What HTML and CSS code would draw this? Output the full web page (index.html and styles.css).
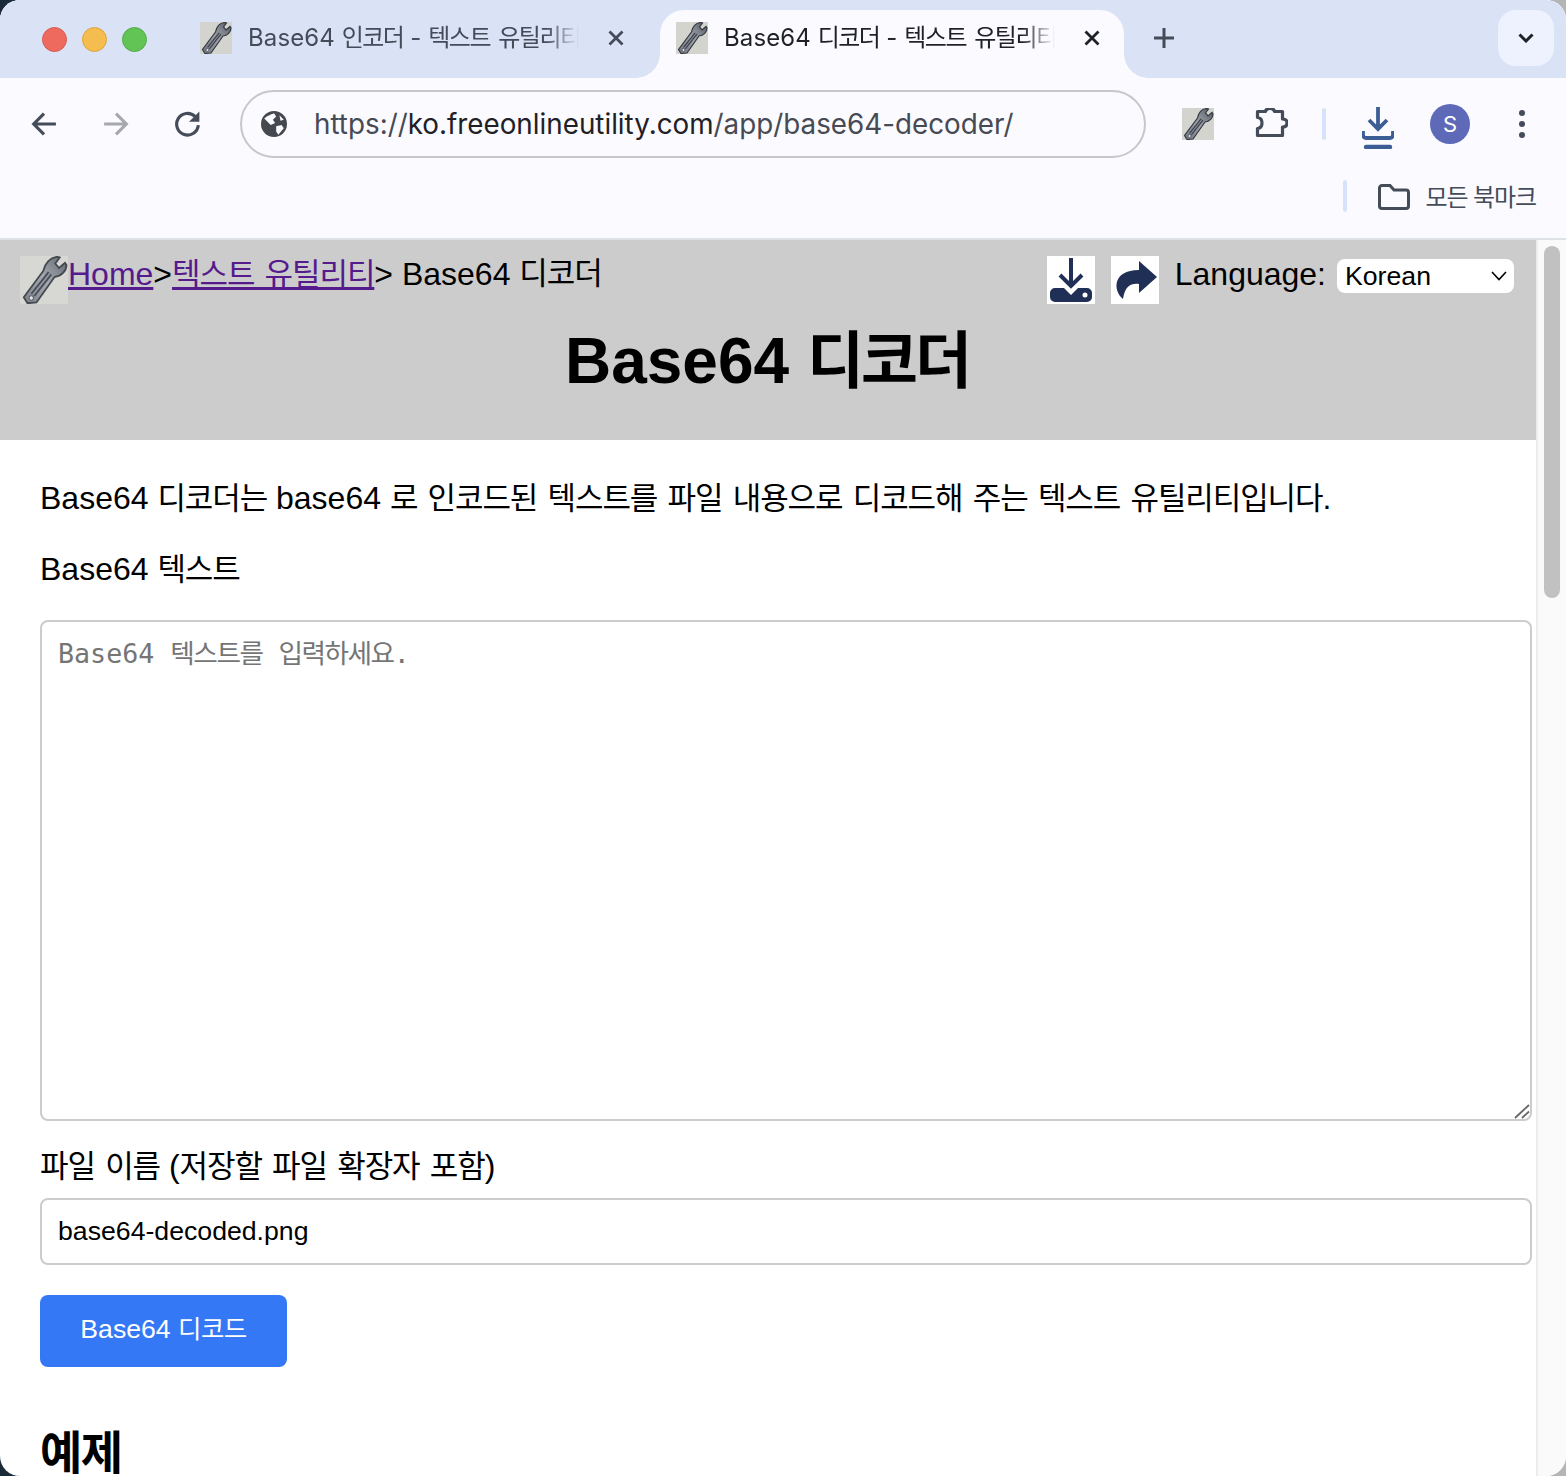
FILE: index.html
```html
<!DOCTYPE html>
<html lang="ko">
<head>
<meta charset="utf-8">
<title>Base64 디코더</title>
<link rel="stylesheet" href="styles.css">
</head>
<body>
<svg class="defs" width="0" height="0" aria-hidden="true">
  <defs>
    <linearGradient id="steel" x1="0" y1="1" x2="1" y2="0">
      <stop offset="0" stop-color="#6f757f"/>
      <stop offset=".5" stop-color="#9da2aa"/>
      <stop offset="1" stop-color="#525862"/>
    </linearGradient>
    <symbol id="wrench" viewBox="0 0 32 32">
      <rect width="32" height="32" fill="#d4d4cf"/>
      <path d="M5 31.5 L2.5 27.5 L15.5 10 C16.5 5 20 1 25 .5 L26.5 1 L23.5 5 L26 8 L30 4.5 L31 6 C31 10 27.5 13.5 23 14 L11 31 Z" fill="url(#steel)" stroke="#343941" stroke-width="1.2"/>
      <path d="M8.5 26 L20 11.5" stroke="#3a3f48" stroke-width="3.6" fill="none"/>
      <path d="M8.5 26 L20 11.5" stroke="#8b909a" stroke-width="1.2" fill="none"/>
      <circle cx="7.5" cy="28" r="1.5" fill="#dfe1e4" stroke="#343941" stroke-width=".6"/>
    </symbol>
  </defs>
</svg>
<div class="window">
  <header class="chrome">
    <div class="tabstrip">
      <div class="lights">
        <span class="light red"></span>
        <span class="light yellow"></span>
        <span class="light green"></span>
      </div>
      <div class="tab">
        <svg class="favicon"><use href="#wrench"/></svg>
        <span class="tab-title">Base64 <span class="ko-tab">인코더</span> - <span class="ko-tab">텍스트 유틸리티</span></span>
        <svg class="tab-close" viewBox="0 0 16 16"><path d="M1.5 1.5 L14.5 14.5 M14.5 1.5 L1.5 14.5"/></svg>
      </div>
      <div class="tab active">
        <svg class="favicon"><use href="#wrench"/></svg>
        <span class="tab-title">Base64 <span class="ko-tab">디코더</span> - <span class="ko-tab">텍스트 유틸리티</span></span>
        <svg class="tab-close" viewBox="0 0 16 16"><path d="M1.5 1.5 L14.5 14.5 M14.5 1.5 L1.5 14.5"/></svg>
      </div>
      <svg class="new-tab" viewBox="0 0 20 20"><path d="M10 0 V20 M0 10 H20"/></svg>
      <div class="tab-menu">
        <svg viewBox="0 0 16 10"><path d="M1.5 1.5 L8 8 L14.5 1.5"/></svg>
      </div>
    </div>
    <div class="toolbar">
      <div class="nav">
        <svg class="nav-icon" viewBox="0 0 24 24"><path d="M23 12 H3 M12 2.5 L2.5 12 L12 21.5"/></svg>
        <svg class="nav-icon dim" viewBox="0 0 24 24"><path d="M1 12 H21 M12 2.5 L21.5 12 L12 21.5"/></svg>
        <svg class="nav-icon" viewBox="0 0 24 24"><path d="M21.5 13 A10 10 0 1 1 18.5 5"/><path class="solid" d="M22.5 0.5 V10 H13 Z"/></svg>
      </div>
      <div class="omnibox">
        <svg class="globe" viewBox="0 0 24 24"><circle cx="12" cy="12" r="12" fill="#45484f"/><path d="M3 7 C6 4 10 3 12 2 L14 5 L11 8 L13 11 L9 13 L6 10 Z M14 14 L19 13 L21 16 L16 22 L14 19 Z M17 4 L21 8 L18 9 Z" fill="#fafaff"/></svg>
        <span class="url"><span class="url-dim">https://</span>ko.freeonlineutility.com<span class="url-dim">/app/base64-decoder/</span></span>
      </div>
      <svg class="ext-icon"><use href="#wrench"/></svg>
      <svg class="puzzle" viewBox="0 0 34 32"><path d="M3.5 3.5 H11.5 Q12 .5 16 .5 Q20 .5 20.5 3.5 H28.5 V11 Q33 11 33 15 Q33 19 28.5 19 V27.5 H3.5 V20.5 Q8 20 8 15 Q8 10 3.5 9.5 Z"/></svg>
      <span class="sep"></span>
      <svg class="download" viewBox="0 0 32 42"><path d="M16 0 V21 M7 13 L16 22 L25 13 M1 24 V28 A3 3 0 0 0 4 31 H28 A3 3 0 0 0 31 28 V24"/><path class="bar" d="M4 40 H28"/></svg>
      <span class="avatar">S</span>
      <span class="kebab"><i></i><i></i><i></i></span>
    </div>
    <div class="bookmarks">
      <span class="sep tall"></span>
      <svg class="folder" viewBox="0 0 32 26"><path d="M1.5 4 A2.5 2.5 0 0 1 4 1.5 H12 L16 6 H28 A2.5 2.5 0 0 1 30.5 8.5 V22 A2.5 2.5 0 0 1 28 24.5 H4 A2.5 2.5 0 0 1 1.5 22 Z"/></svg>
      <span class="bookmark-label">모든 북마크</span>
    </div>
  </header>
  <div class="viewport">
    <main class="page">
      <section class="banner">
        <div class="banner-top">
          <nav class="crumbs">
            <svg class="logo"><use href="#wrench"/></svg>
            <a href="#">Home</a>&gt;<a href="#"><span class="ko">텍스트 유틸리티</span></a>&gt; Base64 <span class="ko">디코더</span>
          </nav>
          <div class="tools">
            <span class="tool">
              <svg viewBox="0 0 48 48"><path class="navy-line" d="M24 2 V28 M13 19 L24 30 L35 19"/><path class="navy" d="M3 37 A5 5 0 0 1 8 32 H17 L24 39 L31 32 H40 A5 5 0 0 1 45 37 V41 A5 5 0 0 1 40 46 H8 A5 5 0 0 1 3 41 Z"/><circle cx="38" cy="39" r="2.5" fill="#fff"/></svg>
            </span>
            <span class="tool">
              <svg viewBox="0 0 48 48"><path class="navy" d="M28 5 L46 21 L28 37 V28 C20 27 14 30 12 43 C2 35 1 14 28 14 Z"/></svg>
            </span>
            <label class="lang" for="lang">Language:</label>
            <span class="select-wrap">
              <select id="lang" class="select"><option>Korean</option></select>
              <svg class="select-arrow" viewBox="0 0 16 10"><path d="M1 1 L8 8.5 L15 1"/></svg>
            </span>
          </div>
        </div>
        <h1>Base64 <span class="ko-h1">디코더</span></h1>
      </section>
      <section class="content">
        <p class="intro">Base64 <span class="ko">디코더는</span> base64 <span class="ko">로 인코드된 텍스트를 파일 내용으로 디코드해 주는 텍스트 유틸리티입니다</span>.</p>
        <label class="label first" for="b64">Base64 <span class="ko">텍스트</span></label>
        <div class="area-wrap">
          <textarea id="b64" class="area" aria-label="Base64 텍스트를 입력하세요."></textarea>
          <span class="hint">Base64 <span class="ko-hint">텍스트를</span> <span class="ko-hint">입력하세요</span>.</span>
          <svg class="grip" viewBox="0 0 16 16"><path d="M1 15 L15 2 M8 15 L15 8.5"/></svg>
        </div>
        <label class="label second" for="fname"><span class="ko">파일 이름</span> (<span class="ko">저장할 파일 확장자 포함</span>)</label>
        <input id="fname" class="field" type="text" value="base64-decoded.png">
        <button class="btn" type="button"><span class="btn-text">Base64 <span class="ko-btn">디코드</span></span></button>
        <h2><span class="ko-h2">예제</span></h2>
      </section>
    </main>
    <aside class="scrollbar"><div class="thumb"></div></aside>
  </div>
</div>
</body>
</html>
```

FILE: styles.css
```css
* { box-sizing: border-box; }
html, body { margin: 0; height: 100%; overflow: hidden; }
body {
  background: linear-gradient(90deg, #1b2a38 0%, #8c8f94 50%, #b5b5b5 100%);
  font-family: "Liberation Sans", "Noto Sans CJK KR", sans-serif;
  color: #000;
}
.defs { position: absolute; }
.window {
  height: 1476px;
  display: flex;
  flex-direction: column;
  border-radius: 20px;
  overflow: hidden;
  background: #fff;
}

/* browser chrome */
.chrome { background: #fafaff; flex: none; height: 240px; border-bottom: 2px solid #dfe3e8; }
.tabstrip {
  height: 78px;
  background: #dae3f5;
  display: flex;
  align-items: flex-start;
  position: relative;
}
.lights { display: flex; gap: 15px; padding: 27px 0 0 42px; width: 184px; flex: none; }
.light { width: 25px; height: 25px; border-radius: 50%; }
.red { background: #ee6a5f; border: 1px solid #d85a50; }
.yellow { background: #f5bd4f; border: 1px solid #dba540; }
.green { background: #61c454; border: 1px solid #54ab48; }
.tab {
  width: 476px;
  height: 68px;
  margin-top: 10px;
  padding: 0 24px 0 16px;
  display: flex;
  align-items: flex-start;
  position: relative;
  color: #444b59;
  border-radius: 24px 24px 0 0;
}
.tab.active { background: #fafaff; color: #1f2127; width: 464px; position: relative; }
.tab.active::after {
  content: "";
  position: absolute;
  right: -24px;
  bottom: 0;
  width: 24px;
  height: 24px;
  background: radial-gradient(circle at 100% 0, #dae3f5 23.5px, #fafaff 24px);
}
.tab.active::before {
  content: "";
  position: absolute;
  left: -24px;
  bottom: 0;
  width: 24px;
  height: 24px;
  background: radial-gradient(circle at 0 0, #dae3f5 23.5px, #fafaff 24px);
}
.favicon { width: 32px; height: 32px; margin-top: 12px; flex: none; }
.tab-title {
  margin: 12px 0 0 16px;
  width: 331px;
  flex: none;
  white-space: nowrap;
  overflow: hidden;
  font: 24px/32px Inter, "Noto Sans CJK KR", sans-serif;
  letter-spacing: .1px;
  -webkit-mask-image: linear-gradient(90deg, #000 90%, transparent 100%);
  mask-image: linear-gradient(90deg, #000 90%, transparent 100%);
}
.ko-tab { letter-spacing: -1.5px; word-spacing: 3px; }
.tab-close {
  width: 16px;
  height: 16px;
  margin: 20px 0 0 29px;
  flex: none;
  fill: none;
  stroke: currentColor;
  stroke-width: 2.8;
}
.new-tab {
  width: 20px;
  height: 20px;
  margin: 28px 0 0 30px;
  fill: none;
  stroke: #444b59;
  stroke-width: 3;
  flex: none;
}
.tab-menu {
  position: absolute;
  left: 1498px;
  top: 10px;
  width: 56px;
  height: 56px;
  border-radius: 18px;
  background: #eef2fe;
  display: flex;
  align-items: center;
  justify-content: center;
}
.tab-menu svg { width: 16px; height: 10px; fill: none; stroke: #1f2127; stroke-width: 3; }
.toolbar {
  height: 92px;
  display: flex;
  align-items: center;
  padding: 0 0 0 31px;
  position: relative;
  background: #fafaff;
  border-radius: 20px 20px 0 0;
}
.nav { display: flex; gap: 46px; width: 209px; flex: none; }
.nav-icon { width: 26px; height: 26px; fill: none; stroke: #444b59; stroke-width: 2.9; }
.nav-icon.dim { stroke: #a6a8ad; }
.nav-icon .solid { fill: #444b59; stroke: none; }
.omnibox {
  width: 906px;
  height: 68px;
  border: 2px solid #c7c7cb;
  border-radius: 34px;
  display: flex;
  align-items: center;
  padding-left: 19px;
  flex: none;
}
.globe { width: 26px; height: 26px; flex: none; }
.url { margin-left: 27px; font: 27.8px Inter, sans-serif; color: #1f2127; white-space: nowrap; }
.url-dim { color: #474a52; }
.ext-icon { width: 32px; height: 32px; margin-left: 36px; flex: none; }
.puzzle {
  width: 34px;
  height: 32px;
  margin-left: 40px;
  flex: none;
  fill: none;
  stroke: #444b59;
  stroke-width: 3.2;
  stroke-linejoin: round;
}
.sep { width: 4px; height: 32px; border-radius: 2px; background: #d7e3fa; margin-left: 34px; flex: none; }
.download {
  width: 32px;
  height: 42px;
  margin: 8px 0 0 36px;
  flex: none;
  fill: none;
  stroke: #3b5f94;
  stroke-width: 3.8;
}
.download .bar { stroke-width: 4.4; stroke-linecap: round; }
.avatar {
  width: 40px;
  height: 40px;
  margin-left: 36px;
  border-radius: 50%;
  background: #5e6ab8;
  color: #fff;
  font: 22px/40px Inter, sans-serif;
  text-align: center;
  flex: none;
}
.kebab { display: flex; flex-direction: column; gap: 5px; margin-left: 49px; flex: none; }
.kebab i { width: 6px; height: 6px; border-radius: 50%; background: #444b59; }
.bookmarks { height: 68px; display: flex; align-items: center; justify-content: flex-end; padding: 0 30px 16px 0; }
.sep.tall { height: 32px; margin: 0 31px 0 0; }
.folder {
  width: 32px;
  height: 26px;
  fill: none;
  stroke: #444b59;
  stroke-width: 3;
  margin-top: 2px;
}
.bookmark-label { margin-left: 15px; font: 24px/32px "Noto Sans CJK KR", sans-serif; color: #444b59; letter-spacing: -1.1px; }

/* page */
.viewport { flex: 1; min-height: 0; display: flex; }
.page { width: 1536px; flex: none; overflow: hidden; }
.scrollbar {
  flex: 1;
  background: #fafafa;
  border-left: 2px solid #ececec;
  padding: 6px 6px 0 6px;
}
.thumb { height: 352px; border-radius: 8px; background: #c1c1c1; }
.banner { height: 200px; background: #ccc; padding: 16px 22px 0 20px; }
.banner-top { display: flex; justify-content: space-between; align-items: flex-start; }
.crumbs { display: flex; align-items: flex-start; font-size: 32px; line-height: 36px; white-space: pre; }
.crumbs a { color: #551a8b; }
.logo { width: 48px; height: 48px; flex: none; filter: blur(.6px) contrast(.85) brightness(1.08); }
.tools { display: flex; align-items: flex-start; }
.tool { width: 48px; height: 48px; background: #fff; display: block; margin-right: 16px; }
.tool svg { width: 48px; height: 48px; display: block; }
.navy { fill: #1f2f55; }
.navy-line { fill: none; stroke: #1f2f55; stroke-width: 4; }
.lang { font-size: 32px; line-height: 36px; }
.select-wrap { position: relative; margin: 3px 0 0 11px; display: block; }
.select {
  display: block;
  width: 177px;
  height: 34px;
  appearance: none;
  border: 0;
  border-radius: 8px;
  background: #fff;
  font: 26.67px "Liberation Sans", sans-serif;
  padding: 0 8px;
  color: #000;
}
.select-arrow {
  position: absolute;
  right: 7px;
  top: 12px;
  width: 16px;
  height: 10px;
  fill: none;
  stroke: #000;
  stroke-width: 1.6;
}
h1 { margin: 21px 0 0; text-align: center; font-size: 64px; line-height: 72px; font-weight: 700; }
.ko-h1 { font-size: 62px; letter-spacing: -3px; }
.content { padding: 0 4px 0 40px; }
.ko { font-size: 31px; letter-spacing: -1.1px; word-spacing: 2.8px; }
.intro { margin: 0; padding-top: 40px; font-size: 32px; line-height: 36px; }
.label { display: block; font-size: 32px; line-height: 36px; }
.label.first { margin-top: 34px; }
.label.second { margin-top: 27px; }
.area-wrap { position: relative; margin-top: 32px; }
.area {
  display: block;
  width: 100%;
  height: 501px;
  border: 2px solid #ccc;
  border-radius: 8px;
  padding: 16px;
  resize: none;
  font: 26.67px/32px "DejaVu Sans Mono", "Noto Sans CJK KR", monospace;
}
.hint {
  position: absolute;
  left: 18px;
  top: 18px;
  font: 26.67px/32px "DejaVu Sans Mono", "Noto Sans CJK KR", monospace;
  color: #757575;
  pointer-events: none;
  white-space: pre;
}
.ko-hint { letter-spacing: -1.5px; }
.grip {
  position: absolute;
  right: 2px;
  bottom: 2px;
  width: 16px;
  height: 16px;
  fill: none;
  stroke: #666;
  stroke-width: 1.8;
  pointer-events: none;
}
.field {
  display: block;
  width: 100%;
  height: 67px;
  margin-top: 13px;
  border: 2px solid #ccc;
  border-radius: 8px;
  padding: 0 16px;
  font: 26.67px "Liberation Sans", sans-serif;
  color: #000;
}
.btn {
  display: block;
  width: 247px;
  height: 72px;
  margin-top: 30px;
  padding: 0 0 10px;
  border: 0;
  border-radius: 8px;
  background: #3578f6;
  color: #fff;
  font: 26.67px "Liberation Sans", "Noto Sans CJK KR", sans-serif;
}
.ko-btn { font-size: 25.5px; letter-spacing: -.6px; }
h2 { margin: 58px 0 0; font-size: 48px; line-height: 56px; font-weight: 700; }
.ko-h2 { font-size: 46px; letter-spacing: -1.5px; }
```
